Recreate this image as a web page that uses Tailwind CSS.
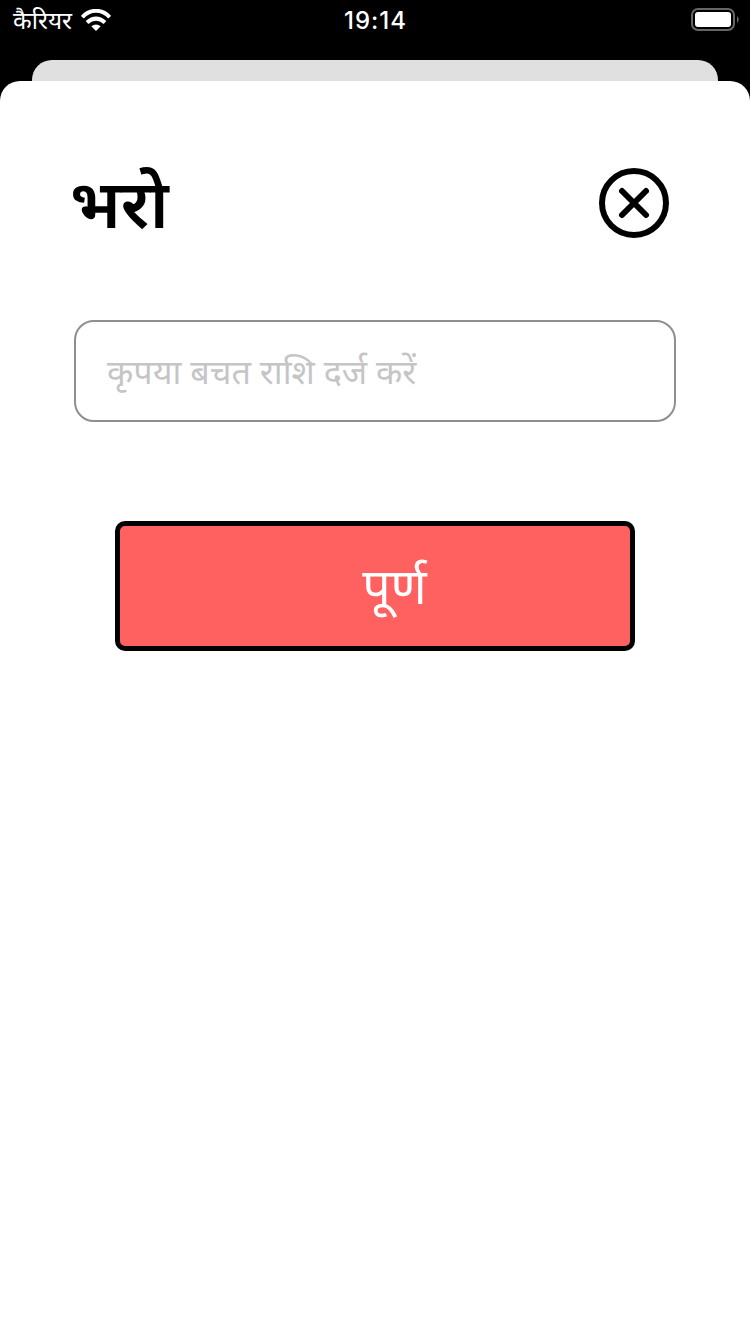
<!DOCTYPE html>
<html lang="hi"><head><meta charset="utf-8"><script src="https://cdn.jsdelivr.net/npm/@tailwindcss/browser@4"></script></head>
<body class="w-[750px] h-[1334px] overflow-hidden bg-black font-['Noto_Sans',sans-serif] flex flex-col">
<header class="h-[60px] shrink-0 flex items-start justify-between text-white">
<div class="flex w-[300px] h-10 pl-[13px]"><span class="w-[59px] whitespace-nowrap text-[24.3px] leading-10">कैरियर</span>
<svg class="ml-[9px] mt-[9px]" width="30" height="23" viewBox="0 0 30 23" fill="none" stroke="#fff" stroke-width="4"><path d="M1.300 8.200C9-.3 21-.3 28.700 8.200M6 13.500Q15 5.700 24 13.500"/><path d="M10.300 17.300Q15 13.600 19.700 17.300L15 22Z" fill="#fff" stroke="none"/></svg></div>
<span class="font-['Inter',sans-serif] font-medium text-[24px] leading-[41px] tracking-[1px] pl-px">19:14</span>
<div class="w-[300px] flex justify-end pr-[11px] pt-2"><svg width="48" height="23" viewBox="0 0 48 23"><rect x="1" y="1" width="42" height="21" rx="6" fill="none" stroke="#666" stroke-width="2"/><rect x="4" y="4" width="36" height="15" rx="3" fill="#fff"/><path d="M46 8q3.500 3.500 0 7z" fill="#666"/></svg></div>
</header>
<div class="h-[21px] shrink-0 mx-8 rounded-t-[20px] bg-[#e0e0e0]"></div>
<main class="grow bg-white rounded-t-[20px]">
<div class="flex justify-between pl-[70px] pr-[81px] pt-[87px]"><h1 class="-mt-px h-[70px] font-semibold text-[67.5px] leading-[70px]">भरो</h1>
<svg width="70" height="70" viewBox="0 0 70 70" fill="none" stroke="#000" stroke-width="6" stroke-linecap="round"><circle cx="35" cy="35" r="32"/><path d="M23 23L47 47M47 23L23 47"/></svg></div>
<div class="mt-[82px] mx-[74px] h-[102px] border-2 border-[#8e8e93] rounded-[20px] pl-[31px] flex items-center text-[34.2px] text-[#c5c5c7]"><span>कृपया बचत राशि दर्ज करें</span></div>
<button class="mt-[99px] ml-[115px] w-[520px] h-[130px] border-[5px] border-black rounded-[10px] bg-[#ff6060] text-white text-[50px] leading-[60px] pl-[39px] pb-[2px] flex items-center justify-center"><span>पूर्ण</span></button>
</main></body></html>
